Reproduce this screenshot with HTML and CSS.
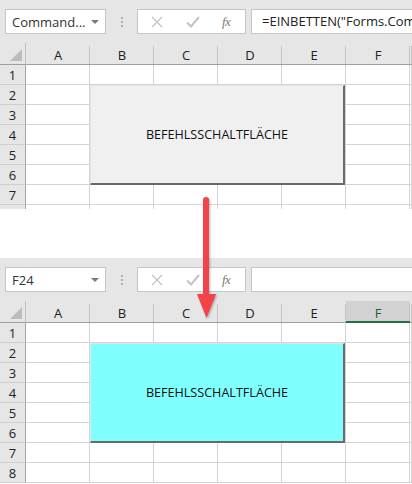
FILE: index.html
```html
<!DOCTYPE html>
<html lang="de">
<head>
<meta charset="utf-8">
<title>Befehlsschaltfläche</title>
<link rel="stylesheet" href="styles.css">
</head>
<body>
<div class="page">
  <section class="shot shot-top">
    <div class="toolbar">
      <div class="namebox"><span class="name">Command...</span><span class="caret"></span></div>
      <div class="dots"><i></i><i></i><i></i></div>
      <div class="fxbox">
        <svg class="ico-x" width="12" height="12" viewBox="0 0 12 12"><path d="M1 1 L11 11 M11 1 L1 11" stroke="#c4c4c4" stroke-width="1.3" fill="none"/></svg>
        <svg class="ico-check" width="14" height="12" viewBox="0 0 14 12"><path d="M1 6.5 L5 10.5 L13 1" stroke="#c4c4c4" stroke-width="2" fill="none"/></svg>
        <span class="fx">fx</span>
      </div>
      <div class="formula">=EINBETTEN("Forms.CommandButton.1";"")</div>
    </div>
    <div class="sheet">
      <div class="corner"><span class="tri"></span></div>
      <div class="colhdr">A</div><div class="colhdr">B</div><div class="colhdr">C</div><div class="colhdr">D</div><div class="colhdr">E</div><div class="colhdr">F</div><div class="colhdr"></div>

      <div class="rowhdr">1</div><div class="cell"></div><div class="cell"></div><div class="cell"></div><div class="cell"></div><div class="cell"></div><div class="cell"></div><div class="cell"></div>
      <div class="rowhdr">2</div><div class="cell"></div><div class="cell"></div><div class="cell"></div><div class="cell"></div><div class="cell"></div><div class="cell"></div><div class="cell"></div>
      <div class="rowhdr">3</div><div class="cell"></div><div class="cell"></div><div class="cell"></div><div class="cell"></div><div class="cell"></div><div class="cell"></div><div class="cell"></div>
      <div class="rowhdr">4</div><div class="cell"></div><div class="cell"></div><div class="cell"></div><div class="cell"></div><div class="cell"></div><div class="cell"></div><div class="cell"></div>
      <div class="rowhdr">5</div><div class="cell"></div><div class="cell"></div><div class="cell"></div><div class="cell"></div><div class="cell"></div><div class="cell"></div><div class="cell"></div>
      <div class="rowhdr">6</div><div class="cell"></div><div class="cell"></div><div class="cell"></div><div class="cell"></div><div class="cell"></div><div class="cell"></div><div class="cell"></div>
      <div class="rowhdr">7</div><div class="cell"></div><div class="cell"></div><div class="cell"></div><div class="cell"></div><div class="cell"></div><div class="cell"></div><div class="cell"></div>
      <div class="rowhdr"></div><div class="cell"></div><div class="cell"></div><div class="cell"></div><div class="cell"></div><div class="cell"></div><div class="cell"></div><div class="cell"></div>

      <div class="cmdbtn cmdbtn-grey">BEFEHLSSCHALTFLÄCHE</div>
    </div>
  </section>

  <section class="shot shot-bottom">
    <div class="toolbar">
      <div class="namebox"><span class="name">F24</span><span class="caret"></span></div>
      <div class="dots"><i></i><i></i><i></i></div>
      <div class="fxbox">
        <svg class="ico-x" width="12" height="12" viewBox="0 0 12 12"><path d="M1 1 L11 11 M11 1 L1 11" stroke="#c4c4c4" stroke-width="1.3" fill="none"/></svg>
        <svg class="ico-check" width="14" height="12" viewBox="0 0 14 12"><path d="M1 6.5 L5 10.5 L13 1" stroke="#c4c4c4" stroke-width="2" fill="none"/></svg>
        <span class="fx">fx</span>
      </div>
      <div class="formula"></div>
    </div>
    <div class="sheet">
      <div class="corner"><span class="tri"></span></div>
      <div class="colhdr">A</div><div class="colhdr">B</div><div class="colhdr">C</div><div class="colhdr">D</div><div class="colhdr">E</div><div class="colhdr colhdr-sel">F</div><div class="colhdr"></div>

      <div class="rowhdr">1</div><div class="cell"></div><div class="cell"></div><div class="cell"></div><div class="cell"></div><div class="cell"></div><div class="cell"></div><div class="cell"></div>
      <div class="rowhdr">2</div><div class="cell"></div><div class="cell"></div><div class="cell"></div><div class="cell"></div><div class="cell"></div><div class="cell"></div><div class="cell"></div>
      <div class="rowhdr">3</div><div class="cell"></div><div class="cell"></div><div class="cell"></div><div class="cell"></div><div class="cell"></div><div class="cell"></div><div class="cell"></div>
      <div class="rowhdr">4</div><div class="cell"></div><div class="cell"></div><div class="cell"></div><div class="cell"></div><div class="cell"></div><div class="cell"></div><div class="cell"></div>
      <div class="rowhdr">5</div><div class="cell"></div><div class="cell"></div><div class="cell"></div><div class="cell"></div><div class="cell"></div><div class="cell"></div><div class="cell"></div>
      <div class="rowhdr">6</div><div class="cell"></div><div class="cell"></div><div class="cell"></div><div class="cell"></div><div class="cell"></div><div class="cell"></div><div class="cell"></div>
      <div class="rowhdr">7</div><div class="cell"></div><div class="cell"></div><div class="cell"></div><div class="cell"></div><div class="cell"></div><div class="cell"></div><div class="cell"></div>
      <div class="rowhdr">8</div><div class="cell"></div><div class="cell"></div><div class="cell"></div><div class="cell"></div><div class="cell"></div><div class="cell"></div><div class="cell"></div>

      <div class="cmdbtn cmdbtn-cyan">BEFEHLSSCHALTFLÄCHE</div>
    </div>
  </section>

  <svg class="arrow" width="412" height="484" viewBox="0 0 412 484">
    <line x1="206" y1="200" x2="206" y2="297" stroke="#f2434b" stroke-width="6" stroke-linecap="round"/>
    <polygon points="197,294 216,294 206.5,318" fill="#f2434b"/>
  </svg>
</div>
</body>
</html>
```
FILE: styles.css
```css
* { box-sizing: border-box; }

html, body {
  margin: 0;
  padding: 0;
  background: #ffffff;
}

body {
  font-family: "Open Sans", "Noto Sans", "Liberation Sans", sans-serif;
  color: #222;
  width: 412px;
  height: 484px;
  overflow: hidden;
}

.page {
  position: relative;
  width: 412px;
  height: 484px;
}

.shot {
  overflow: hidden;
  background: #ffffff;
}

.shot-top {
  height: 209px;
  margin-bottom: 49px;
}

.shot-bottom {
  height: 226px;
}

/* ---------- formula bar ---------- */
.toolbar {
  height: 43px;
  background: #e6e6e6;
  display: flex;
  align-items: flex-start;
  padding: 9px 0 0 5px;
}

.namebox {
  width: 101px;
  height: 25px;
  background: #fff;
  border: 1px solid #c6c6c6;
  display: flex;
  align-items: center;
  justify-content: space-between;
  padding: 0 6px 0 6px;
  font-size: 13px;
  color: #333;
}

.caret {
  width: 0;
  height: 0;
  border-left: 4px solid transparent;
  border-right: 4px solid transparent;
  border-top: 4px solid #7a7a7a;
  margin-top: 1px;
}

.dots {
  width: 31px;
  height: 25px;
  display: flex;
  flex-direction: column;
  align-items: center;
  justify-content: center;
  gap: 2px;
}

.dots i {
  display: block;
  width: 2px;
  height: 2px;
  background: #b0b0b0;
}

.fxbox {
  width: 109px;
  height: 25px;
  background: #fff;
  border: 1px solid #c6c6c6;
  display: flex;
  align-items: center;
  padding-left: 13px;
}

.ico-check {
  margin-left: 23px;
}

.fx {
  margin-left: 22px;
  font-family: "Liberation Serif", "DejaVu Serif", serif;
  font-style: italic;
  font-size: 13px;
  color: #7a7a7a;
  letter-spacing: -0.5px;
}

.formula {
  flex: 1;
  min-width: 0;
  height: 25px;
  margin-left: 5px;
  background: #fff;
  border: 1px solid #c6c6c6;
  border-right: none;
  padding-left: 10px;
  font-size: 13px;
  line-height: 23px;
  color: #222;
  white-space: nowrap;
  overflow: hidden;
}

/* ---------- sheet ---------- */
.sheet {
  position: relative;
  display: grid;
  grid-template-columns: 26px repeat(6, 64px) 1fr;
  grid-template-rows: 22px;
  grid-auto-rows: 20px;
  font-size: 13px;
}

.corner {
  background: #e6e6e6;
  border-bottom: 1px solid #9e9e9e;
  border-right: 1px solid #c0c0c0;
  position: relative;
}

.tri {
  position: absolute;
  left: 10px;
  top: 6px;
  width: 0;
  height: 0;
  border-left: 12px solid transparent;
  border-bottom: 12px solid #bcbcbc;
}

.colhdr {
  background:
    linear-gradient(#c6c6c6, #c6c6c6) right 3px / 1px 19px no-repeat,
    #e6e6e6;
  border-bottom: 1px solid #9e9e9e;
  display: flex;
  align-items: center;
  justify-content: center;
  color: #222;
  padding-top: 2px;
}

.colhdr-sel {
  background:
    linear-gradient(#c6c6c6, #c6c6c6) right 3px / 1px 19px no-repeat,
    #d2d2d2;
  border-bottom: 2px solid #217346;
  color: #1d5c38;
  padding-top: 3px;
}

.rowhdr {
  background: #e6e6e6;
  border-right: 1px solid #a6a6a6;
  border-bottom: 1px solid #cfcfcf;
  display: flex;
  align-items: center;
  justify-content: center;
  color: #222;
}

.cell {
  border-right: 1px solid #d4d4d4;
  border-bottom: 1px solid #d4d4d4;
}

/* ---------- command button (overlay on the sheet) ---------- */
.cmdbtn {
  position: absolute;
  left: 90px;
  top: 42px;
  width: 255px;
  height: 100px;
  display: flex;
  align-items: center;
  justify-content: center;
  font-size: 12.6px;
  color: #111;
  border-top: 1px solid #e4e4e4;
  border-left: 1px solid #e4e4e4;
  border-right: 2px solid #6a6a6a;
  border-bottom: 2px solid #6a6a6a;
}

.cmdbtn-grey {
  background: #f0f0f0;
}

.cmdbtn-cyan {
  background: #80ffff;
}

/* ---------- annotation arrow ---------- */
.arrow {
  position: absolute;
  left: 0;
  top: 0;
  pointer-events: none;
  filter: drop-shadow(1px 1px 1px rgba(0, 0, 0, 0.3));
}
```
